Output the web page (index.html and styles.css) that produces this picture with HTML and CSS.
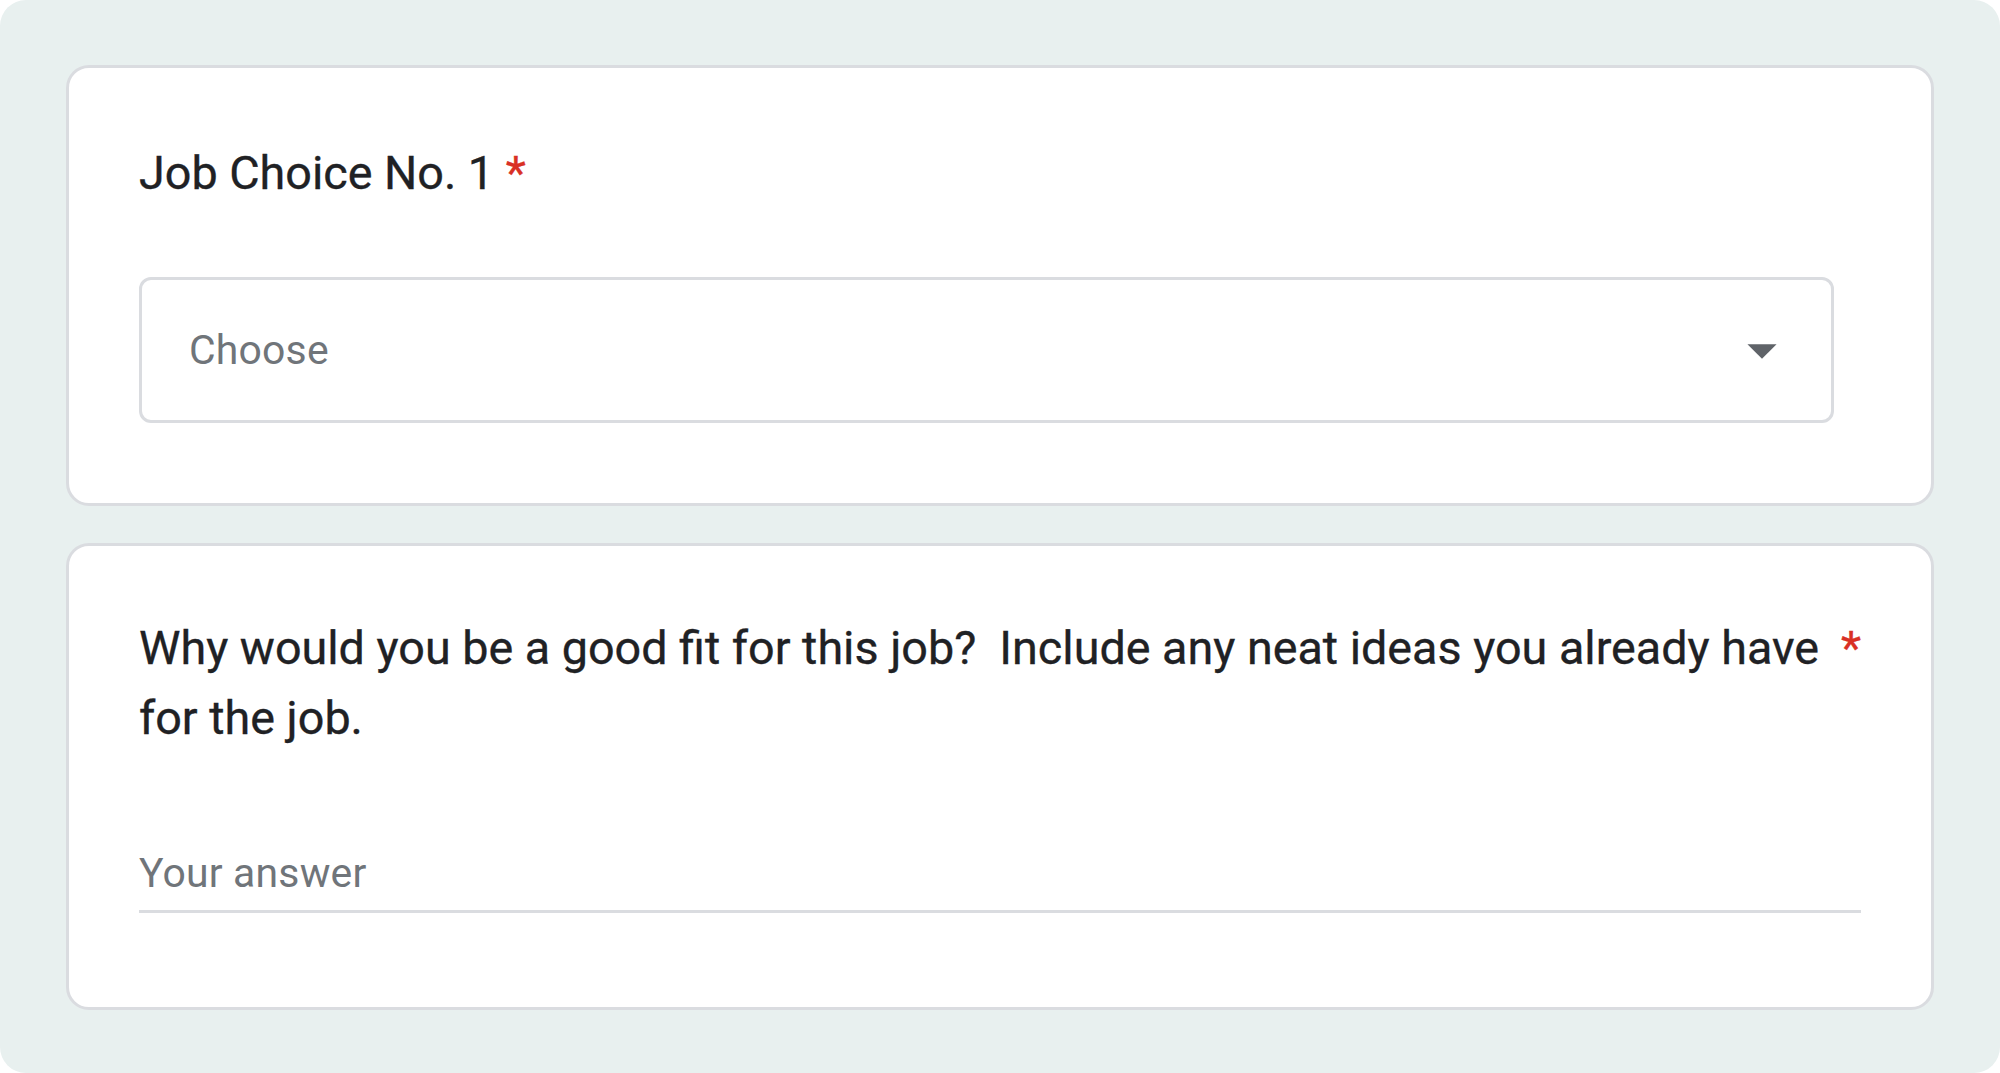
FILE: index.html
```html
<!DOCTYPE html>
<html lang="en">
<head>
<meta charset="utf-8">
<title>Job Choice</title>
<link rel="stylesheet" href="styles.css">
</head>
<body>
<div class="frame">
  <div class="card card-choice">
    <div class="q-title"><span class="q-text">Job Choice No. 1</span><span class="req">*</span></div>
    <div class="select">
      <span class="select-placeholder">Choose</span>
      <svg class="select-arrow" viewBox="0 0 24 24"><path d="M7 10l5 5 5-5z"/></svg>
    </div>
  </div>
  <div class="card card-text">
    <div class="q-title"><span class="q-text">Why would you be a good fit for this job?&nbsp; Include any neat ideas you already have for the job.</span><span class="req">*</span></div>
    <div class="answer">Your answer</div>
  </div>
</div>
</body>
</html>
```
FILE: styles.css
```css
* { box-sizing: border-box; }
html, body { margin: 0; padding: 0; background: #ffffff; }
body { font-family: Roboto, "Liberation Sans", Arial, sans-serif; }

.frame {
  width: 2000px;
  height: 1073px;
  background: #e8f0ef;
  border-radius: 26px;
  padding: 65px 66px 0 66px;
  display: flex;
  flex-direction: column;
  gap: 37px;
}

.card {
  background: #ffffff;
  border: 3px solid #dadce0;
  border-radius: 23px;
  padding: 70px 70px 0 70px;
}
.card-choice { height: 441px; }
.card-text { height: 467px; padding-top: 67px; }

.q-title {
  display: flex;
  align-items: flex-start;
  font-size: 46.7px;
  line-height: 70px;
  letter-spacing: 0;
  color: #202124;
  font-weight: 400;
  -webkit-text-stroke: 0.35px #202124;
}
.q-text { flex: 0 1 auto; }
.req {
  flex: none;
  color: #d93025;
  -webkit-text-stroke: 0.35px #d93025;
  padding-left: 0.25em;
}

.select {
  margin-top: 69px;
  width: 1695px;
  height: 146px;
  border: 3px solid #dadce0;
  border-radius: 12px;
  display: flex;
  align-items: center;
  justify-content: space-between;
  padding: 0 34px 0 47px;
}
.select-placeholder {
  font-size: 40.9px;
  line-height: 48px;
  color: #70757a;
  letter-spacing: 0.2px;
}
.select-arrow {
  width: 70px;
  height: 70px;
  fill: #5f6368;
}

.answer {
  margin-top: 92px;
  font-size: 40.9px;
  line-height: 56px;
  color: #70757a;
  letter-spacing: 0.2px;
  padding-bottom: 9px;
  border-bottom: 3px solid #dadce0;
}
```
